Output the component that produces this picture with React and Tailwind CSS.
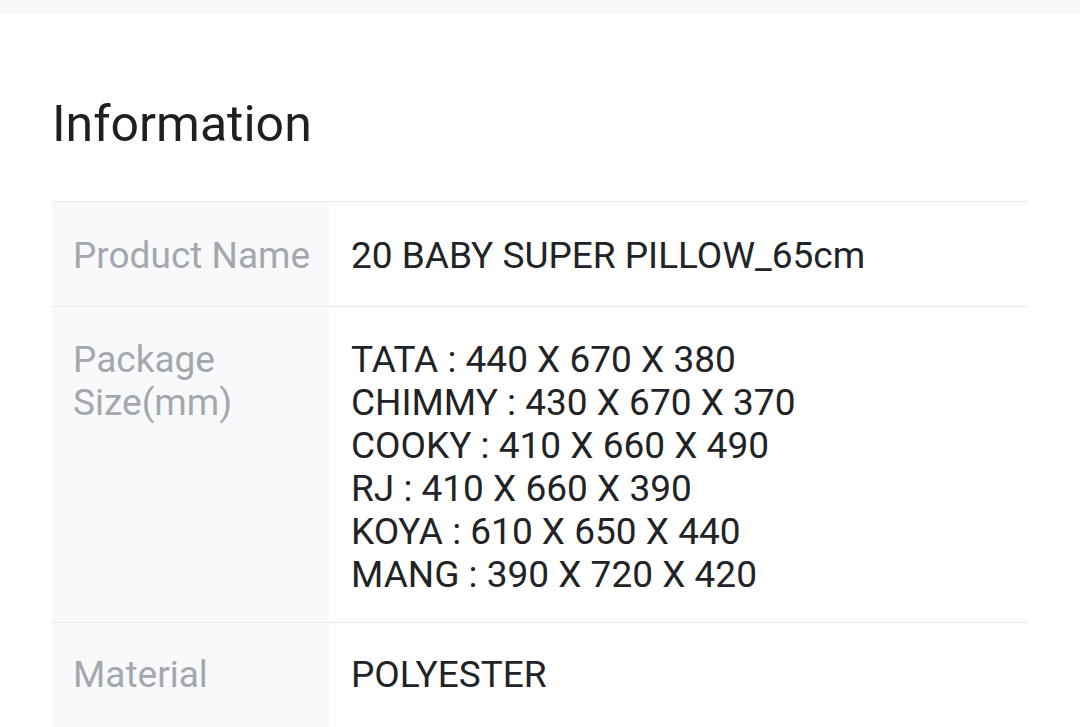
export default function App() {
  const rows = [
    { label: 'Product Name', value: ['20 BABY SUPER PILLOW_65cm'], pad: 'pt-[32px] pb-[29px]' },
    {
      label: 'Package Size(mm)',
      value: [
        'TATA : 440 X 670 X 380',
        'CHIMMY : 430 X 670 X 370',
        'COOKY : 410 X 660 X 490',
        'RJ : 410 X 660 X 390',
        'KOYA : 610 X 650 X 440',
        'MANG : 390 X 720 X 420',
      ],
      pad: 'pt-[31px] pb-[26px]',
    },
    { label: 'Material', value: ['POLYESTER'], pad: 'pt-[30px] pb-[31px]' },
  ];

  return (
    <div className="min-h-screen bg-white font-['Roboto',sans-serif]">
      <div className="h-[14px] bg-[#f8f9fb]" />
      <div className="pl-[52px] pr-[53px]">
        <h2 className="pt-[80px] pb-[47px] text-[50px] leading-[60px] text-[#1f2024] font-normal">
          Information
        </h2>
        <div className="border-t border-[#e8e9eb]">
          {rows.map((row) => (
            <div key={row.label} className="flex border-b border-[#e8e9eb]">
              <div className={`w-[277px] shrink-0 bg-[#f8f9fb] pl-[21px] pr-[12px] text-[37px] leading-[43px] text-[#a4a8ae] ${row.pad}`}>
                {row.label}
              </div>
              <div className={`flex-1 px-[22px] text-[37px] leading-[43px] text-[#222326] ${row.pad}`}>
                {row.value.map((line) => (
                  <div key={line}>{line}</div>
                ))}
              </div>
            </div>
          ))}
        </div>
      </div>
    </div>
  );
}
